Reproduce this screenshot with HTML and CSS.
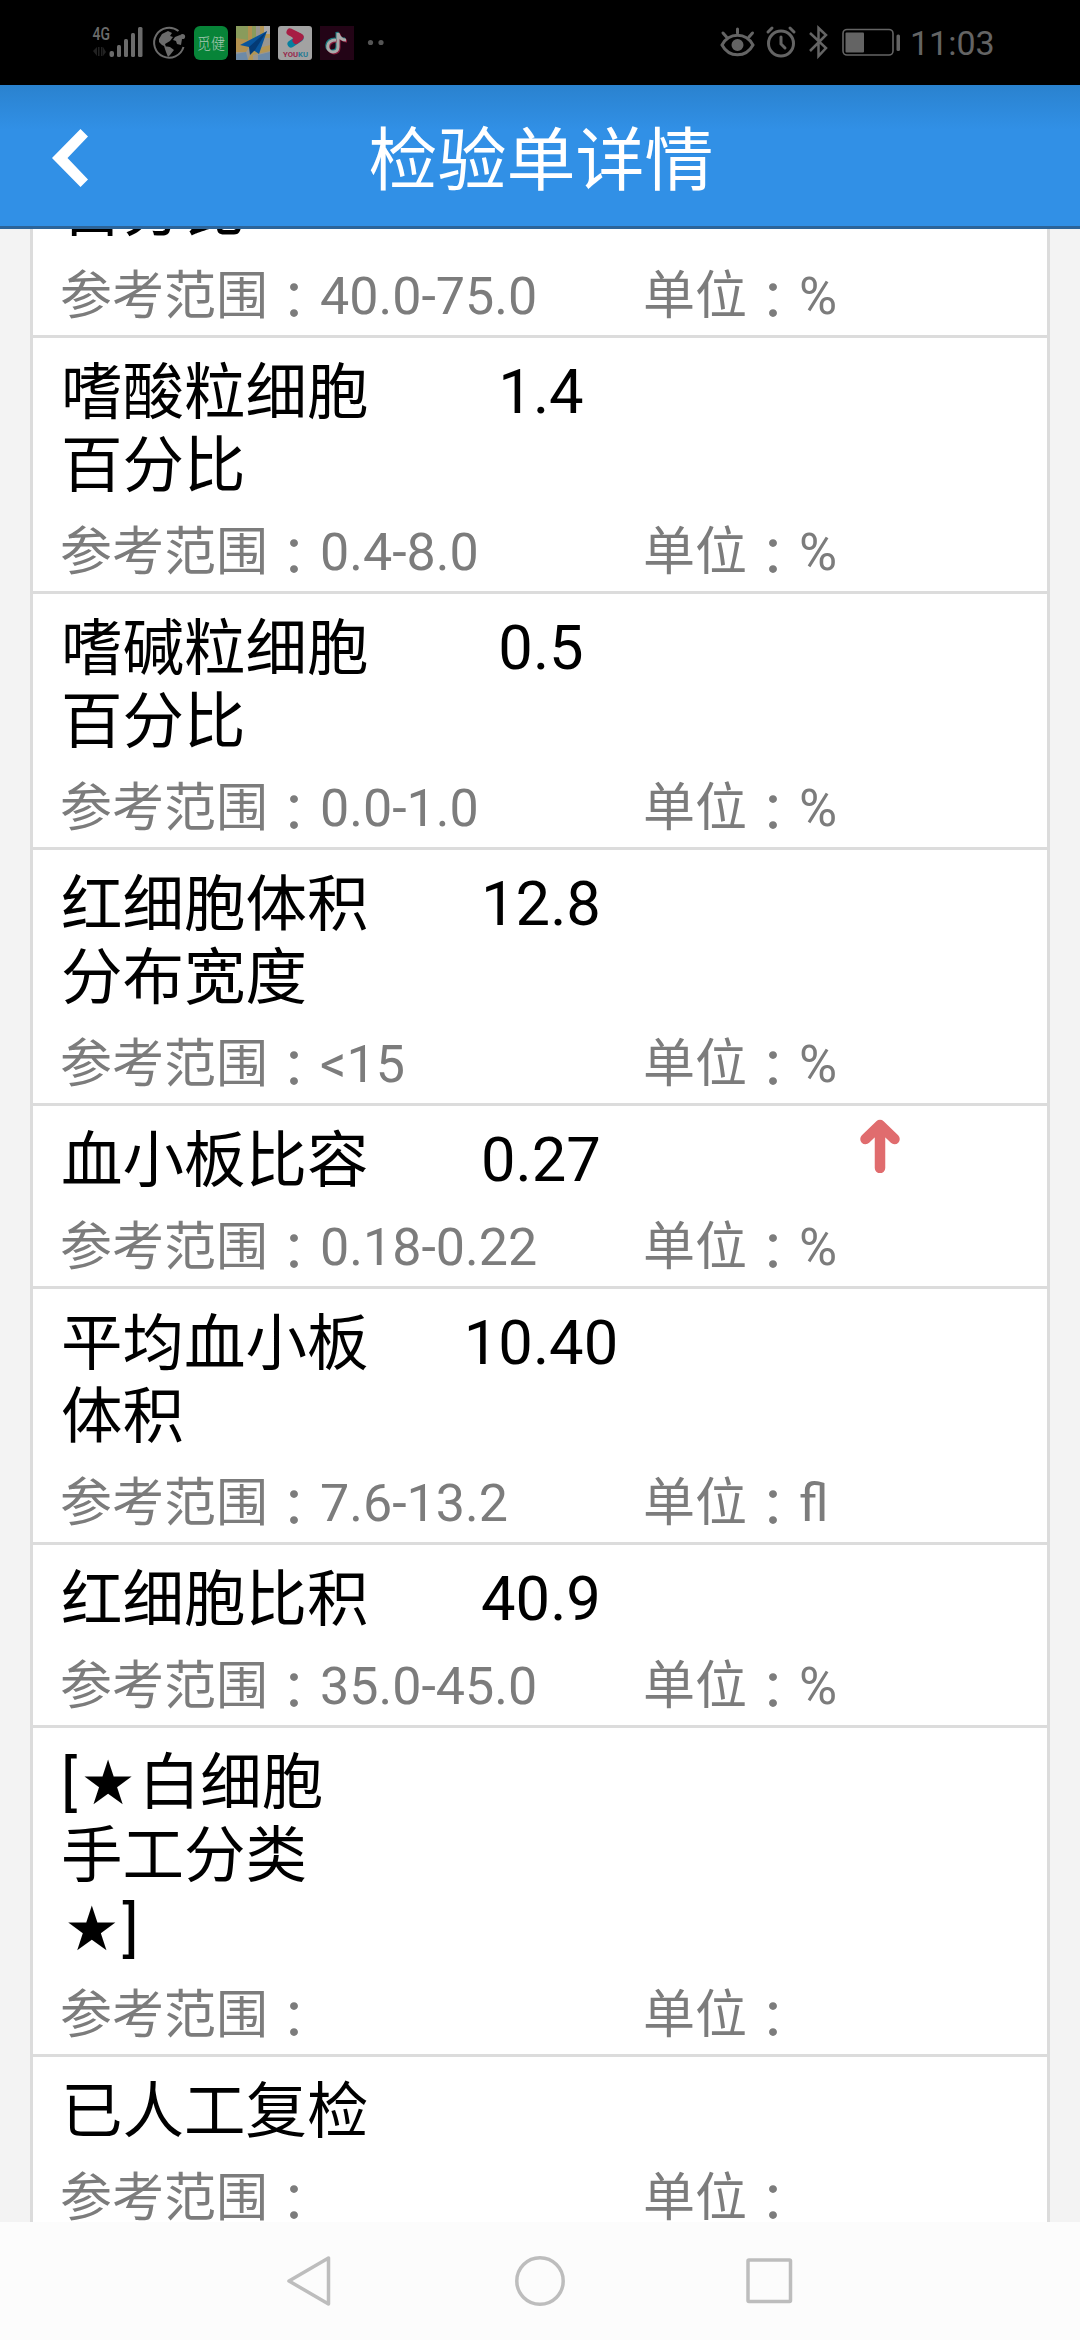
FILE: index.html
```html
<!DOCTYPE html>
<html lang="zh-CN">
<head>
<meta charset="utf-8">
<title>检验单详情</title>
<link rel="stylesheet" href="styles.css">
</head>
<body>
<div class="screen">
  <div class="status">
    <svg class="status-left" width="320" height="85" viewBox="0 0 320 85">
      <text class="net" x="12.500" y="40" textLength="17.500" lengthAdjust="spacingAndGlyphs">4G</text>
      <g fill="#222"><path d="M13 51l4-4v9zM18 47h1.500v9H18zM21 47h1.500v9H21zM26 52l-3-5v9z"/></g>
      <g fill="#6b6b6b">
        <rect x="29.500" y="51" width="4.500" height="6" rx="2"/><rect x="37" y="45" width="4" height="12" rx="1.500"/>
        <rect x="44" y="39" width="4" height="18" rx="1.500"/><rect x="51" y="33" width="4" height="24" rx="1.500"/><rect x="58" y="27" width="4.500" height="30" rx="1.500"/>
      </g>
      <path d="M98.500 31A15 15 0 1 0 103.500 47" fill="none" stroke="#6b6b6b" stroke-width="2"/>
      <circle cx="102.500" cy="36.500" r="2.600" fill="#6b6b6b"/>
      <path d="M79 39l3-5 6-3 4 2-2 3 3 1-3 4-5 3 1 3-4-2-3-3zM84 46l6 1 4 3-4 5-2 2-2-5zM95 37l5-2 2 4-1 6-4-1-1-3-3-1z" fill="#6b6b6b"/>
      <rect x="114" y="26" width="34" height="34" rx="6" fill="#078438"/>
      <text class="app" x="117" y="49" textLength="28" lengthAdjust="spacingAndGlyphs">觅健</text>
      <g>
        <rect x="156" y="26" width="34" height="34" fill="#99968f"/>
        <path d="M156 26h20v11l-10 7-10-3z" fill="#899b5c"/><path d="M156 38l12 2v-14h4v17l-6 9h-10z" fill="#b39150"/><path d="M172 50l18-5v6l-17 4v5h-5zM180 26h4v8h6v4h-10z" fill="#b39655"/><path d="M156 54l10-2 2 8h-12zM178 55l12-3v8h-12z" fill="#6d8aa7"/><path d="M184 26h6v8h-6z" fill="#aaa"/>
        <path d="M187 31l-27 14 9 2 10 7z" fill="#08549b"/><path d="M187 31l-18 16 1 8 5-5z" fill="#043a74"/>
      </g>
      <rect x="198" y="26" width="34" height="34" rx="3" fill="#a2a2a2"/>
      <path d="M210 32l10 5" stroke="#a71d43" stroke-width="7" stroke-linecap="round"/><path d="M220 38l-9 6" stroke="#087f9f" stroke-width="7" stroke-linecap="round"/><path d="M215 35l5 2.500-4 3" fill="none" stroke="#a71d43" stroke-width="7" stroke-linecap="round" stroke-linejoin="round"/>
      <text class="youku" x="203" y="57" textLength="25" lengthAdjust="spacingAndGlyphs"><tspan fill="#98284c">YOU</tspan><tspan fill="#277c94">KU</tspan></text>
      <rect x="240" y="26" width="34" height="34" fill="#230416"/>
      <g fill="none" stroke-width="3"><path d="M256 40c-11 0-10 12-3 12 3 0 5-2 5-5V33c1 5 4 7 8 7" stroke="#187c80" transform="translate(-1 -1)"/><path d="M256 40c-11 0-10 12-3 12 3 0 5-2 5-5V33c1 5 4 7 8 7" stroke="#8c1d3d" transform="translate(1 1)"/><path d="M256 40c-11 0-10 12-3 12 3 0 5-2 5-5V33c1 5 4 7 8 7" stroke="#aaa"/></g>
      <circle cx="290.500" cy="42.500" r="2.600" fill="#555"/><circle cx="301" cy="42.500" r="2.600" fill="#555"/>
    </svg>
    <svg class="status-icons" width="202" height="85" viewBox="0 0 202 85">
      <g fill="none" stroke="#646464" stroke-width="3" stroke-linecap="round">
        <path d="M21 45c7-13 24-13 31 0-7 13-24 13-31 0z"/><path d="M36.500 33v-4M25.500 37l-3.500-4M48 37l3.500-4"/>
        <circle cx="36.500" cy="45" r="4.500" fill="#646464"/>
        <circle cx="80" cy="43.500" r="12.500"/><path d="M80 37v7l4 4M67 32l4-4M93 32l-4-4"/>
        <path d="M109 33l16 15-7.500 8V28l7.500 7-16 16" stroke-width="2.500" stroke-linecap="butt"/>
        <rect x="142" y="29.500" width="50" height="25.500" rx="4" stroke-width="1.600"/>
      </g>
      <rect x="144.500" y="32.500" width="18.500" height="20" rx="1" fill="#646464"/><rect x="195.500" y="34.500" width="3.500" height="16.500" rx="1.500" fill="#646464"/>
    </svg>
    <div class="clock">11:03</div>
  </div>
  <div class="header">
    <svg class="back" width="36" height="58" viewBox="0 0 36 58"><path d="M28.500 0L36 7.500 15.500 29 36 50.500 28.500 58 0 29z" fill="#fff"/></svg>
    <div class="title">检验单详情</div>
  </div>
  <div class="content">
    <div class="list">
      <div class="row row-cut"><div class="top"><div class="name">百分比</div></div><div class="meta"><div>参考范围<span class="colon">：</span>40.0-75.0</div><div>单位<span class="colon">：</span>%</div></div></div>
      <div class="row"><div class="top"><div class="name">嗜酸粒细胞百分比</div><div class="value">1.4</div></div><div class="meta"><div>参考范围<span class="colon">：</span>0.4-8.0</div><div>单位<span class="colon">：</span>%</div></div></div>
      <div class="row"><div class="top"><div class="name">嗜碱粒细胞百分比</div><div class="value">0.5</div></div><div class="meta"><div>参考范围<span class="colon">：</span>0.0-1.0</div><div>单位<span class="colon">：</span>%</div></div></div>
      <div class="row"><div class="top"><div class="name">红细胞体积分布宽度</div><div class="value">12.8</div></div><div class="meta"><div>参考范围<span class="colon">：</span>&lt;15</div><div>单位<span class="colon">：</span>%</div></div></div>
      <div class="row"><div class="top"><div class="name">血小板比容</div><div class="value">0.27</div><svg class="arrow" width="40" height="54" viewBox="0 0 40 54"><path d="M20 6v43M5.500 20L20 6l14.500 14" fill="none" stroke="#e06c6e" stroke-width="10.500" stroke-linecap="round" stroke-linejoin="round"/></svg></div><div class="meta"><div>参考范围<span class="colon">：</span>0.18-0.22</div><div>单位<span class="colon">：</span>%</div></div></div>
      <div class="row"><div class="top"><div class="name">平均血小板体积</div><div class="value">10.40</div></div><div class="meta"><div>参考范围<span class="colon">：</span>7.6-13.2</div><div>单位<span class="colon">：</span>fl</div></div></div>
      <div class="row"><div class="top"><div class="name">红细胞比积</div><div class="value">40.9</div></div><div class="meta"><div>参考范围<span class="colon">：</span>35.0-45.0</div><div>单位<span class="colon">：</span>%</div></div></div>
      <div class="row"><div class="top"><div class="name">[<span class="star">★</span>白细胞<br>手工分类<br><span class="star">★</span>]</div></div><div class="meta"><div>参考范围<span class="colon">：</span></div><div>单位<span class="colon">：</span></div></div></div>
      <div class="row"><div class="top"><div class="name">已人工复检</div></div><div class="meta"><div>参考范围<span class="colon">：</span></div><div>单位<span class="colon">：</span></div></div></div>
    </div>
  </div>
  <div class="nav">
    <svg width="506" height="50" viewBox="0 0 506 50" fill="none" stroke="#bdbdbd" stroke-width="3.500" stroke-linejoin="round">
      <path d="M41.500 2v46L2 25z"/><circle cx="253" cy="25" r="23.200"/><rect x="461" y="4" width="42.500" height="41.500" rx="1"/>
    </svg>
  </div>
</div>
</body>
</html>
```
FILE: styles.css
```css
body {
  margin: 0;
  font-family: Roboto, "Noto Sans CJK SC", sans-serif;
}
.screen {
  width: 1080px;
  height: 2340px;
  display: flex;
  flex-direction: column;
  overflow: hidden;
  background: #f3f3f3;
}
.status {
  flex: none;
  height: 85px;
  background: #000;
  display: flex;
  align-items: center;
  padding: 0 85px 0 80px;
}
.status-icons { margin-left: auto; }
.clock {
  width: 85px;
  margin-left: 7px;
  font-size: 34px;
  line-height: 40px;
  color: #646464;
  white-space: nowrap;
}
.net {
  font: 500 18px Roboto, sans-serif;
  fill: #6b6b6b;
}
.app {
  font: 300 15px "Noto Sans CJK SC", sans-serif;
  fill: #a9c9b4;
}
.youku { font: 700 8px Roboto, sans-serif; }
.header {
  flex: none;
  box-sizing: border-box;
  height: 144px;
  border-bottom: 3px solid #2c6499;
  background: linear-gradient(#2a82cf 0, #3190e6 45px);
  display: grid;
  grid-template-columns: 92px 1fr 90px;
  align-items: center;
}
.back {
  margin: 4px 0 0 52px;
}
.title {
  text-align: center;
  font-size: 69px;
  line-height: 80px;
  padding-top: 12px;
  color: #fff;
}
.content {
  flex: 1;
  min-height: 0;
  overflow: hidden;
  padding: 0 30px;
}
.list {
  border: solid #dcdcdc;
  border-width: 0 3px;
  background: #fff;
}
.row {
  border-bottom: 3px solid #dcdcdc;
  padding: 18px 0 8px;
}
.row-cut { margin-top: -74px; }
.top {
  display: grid;
  grid-template-columns: repeat(3, 338px);
  font-size: 61.5px;
  line-height: 73px;
  color: #000;
}
.name {
  padding: 1px 0 0 28px;
  margin-bottom: -1px;
}
.value {
  text-align: center;
  padding-left: 2px;
}
.arrow {
  justify-self: center;
  margin: -5px 0 0 4px;
}
.meta {
  display: grid;
  grid-template-columns: 583px 1fr;
  padding: 20px 0 0 27px;
  font-size: 52px;
  line-height: 61px;
  color: #7c7c7c;
}
/* the traditional form of the colon sits in the middle of its box */
.colon {
  -webkit-locale: "zh-TW";
  font-family: "Noto Sans CJK TC", sans-serif;
  line-height: 0;
  vertical-align: -6px;
}
.star {
  display: inline-block;
  width: 1em;
  text-align: center;
  font-family: "DejaVu Sans", sans-serif;
}
.nav {
  flex: none;
  height: 118px;
  background: #fcfcfc;
  display: flex;
  justify-content: center;
  align-items: center;
}
```
